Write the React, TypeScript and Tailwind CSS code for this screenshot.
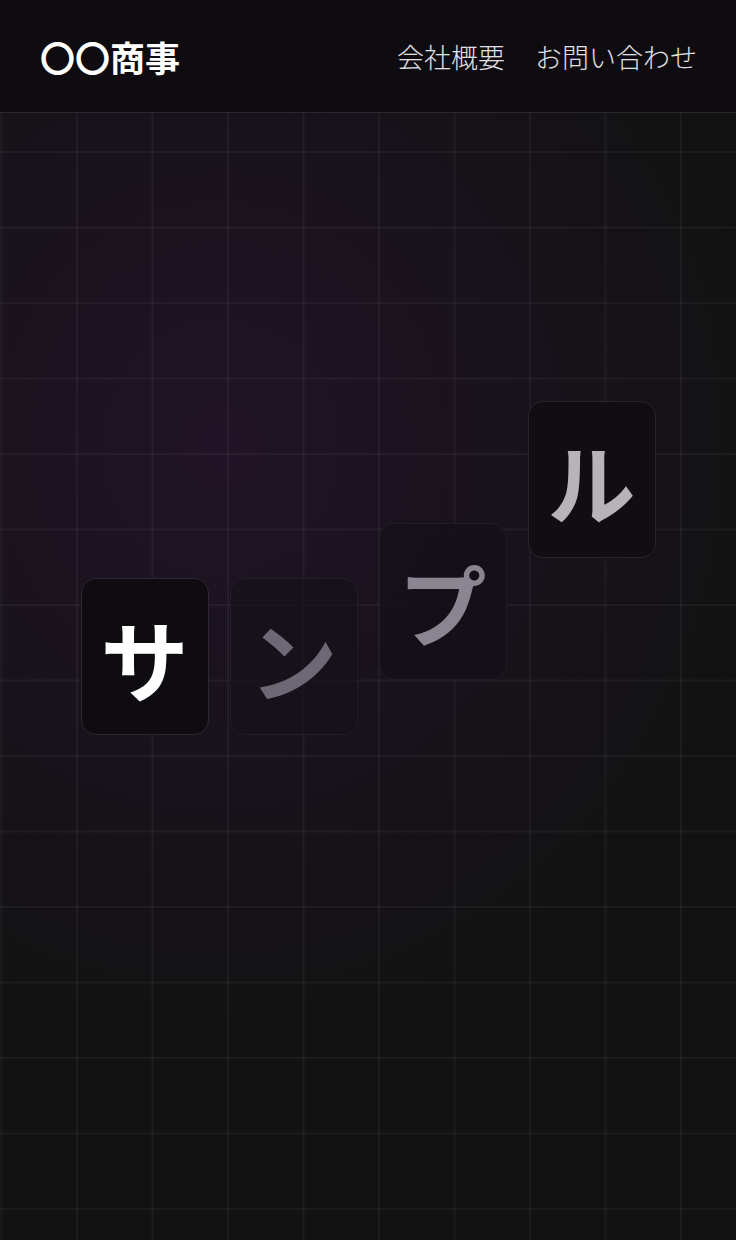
import React from 'react';

const letters = [
    { ch: 'サ', offset: 'mt-[177px]', text: 'text-white', box: 'bg-[#0e0c11] border-[#2c2831]' },
    { ch: 'ン', offset: 'mt-[177px]', text: 'text-[#6d6873]', box: 'bg-[#16111b]/70 border-[#221d28]' },
    { ch: 'プ', offset: 'mt-[122px]', text: 'text-[#8a8590]', box: 'bg-[#141018]/80 border-[#211d26]' },
    { ch: 'ル', offset: 'mt-0', text: 'text-[#b6b3b9]', box: 'bg-[#100e13] border-[#28252c]' },
];

const App: React.FC = () => {
    return (
        <div
            className="min-h-[1240px] w-full bg-[#121212] relative overflow-hidden"
            style={{ fontFamily: '"Noto Sans CJK JP", "Noto Sans", sans-serif' }}
        >
            {/* glow + grid */}
            <div className="absolute inset-0 bg-[radial-gradient(ellipse_75%_48%_at_30%_36%,rgba(38,20,46,0.7),rgba(18,18,18,0)_100%)]" />
            <div className="absolute inset-0 bg-[linear-gradient(to_right,rgba(255,255,255,0.045)_1.5px,transparent_1.5px),linear-gradient(to_bottom,rgba(255,255,255,0.045)_1.5px,transparent_1.5px)] bg-[size:75.5px_75.5px] bg-[position:0.5px_0px]" />

            {/* Header */}
            <header className="relative h-[113px] bg-[#0e0c10] border-b-[1.5px] border-[#2a282d] flex items-center justify-between pl-[40px] pr-[39px]">
                <div className="text-white text-[35px] font-bold leading-none">〇〇商事</div>
                <nav className="flex items-center gap-[30px] text-[#e2e0e4] text-[27px] font-light leading-none">
                    <a href="#about">会社概要</a>
                    <a href="#contact">お問い合わせ</a>
                </nav>
            </header>

            {/* Hero letters */}
            <main className="relative flex justify-center items-start gap-[21px] pt-[288px]">
                {letters.map((l) => (
                    <div
                        key={l.ch}
                        className={`${l.offset} w-[128px] h-[157px] rounded-[15px] border-[1.5px] flex items-center justify-center ${l.box}`}
                    >
                        <span className={`text-[88px] font-bold leading-none ${l.text}`}>{l.ch}</span>
                    </div>
                ))}
            </main>
        </div>
    );
};

export default App;
